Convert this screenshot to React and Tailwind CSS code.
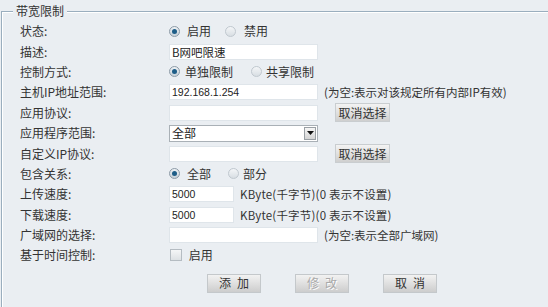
import React from "react";

const CJK = { fontFamily: '"Noto Sans CJK SC", "Liberation Sans", sans-serif' };

function Radio({ checked }) {
  return checked ? (
    <span className="flex h-[11px] w-[11px] shrink-0 items-center justify-center rounded-full border border-[#8d9ba7] bg-gradient-to-b from-[#eef2f5] to-[#c6d0d8]">
      <span className="h-[5px] w-[5px] rounded-full bg-[#1d5d87]" />
    </span>
  ) : (
    <span className="block h-[11px] w-[11px] shrink-0 rounded-full border border-[#c0c8cf] bg-gradient-to-b from-[#f4f6f8] to-[#d8dee3]" />
  );
}

function TextBox({ value = "", w = "w-[149px]" }) {
  return (
    <div
      className={`flex h-[16px] ${w} items-center border border-[#dfe5ea] bg-white pl-[2px] text-[10.5px] text-[#222]`}
      style={{ fontFamily: '"Liberation Sans", "Noto Sans CJK SC", sans-serif' }}
    >
      {value}
    </div>
  );
}

function CancelSel() {
  return (
    <div className="ml-[17px] flex h-[19px] w-[55px] items-center justify-center border border-[#c9cdd0] bg-gradient-to-b from-[#f3f3f3] to-[#cfcfcf] text-[12px] text-[#333]">
      取消选择
    </div>
  );
}

function Row({ label, children }) {
  return (
    <div className="grid h-[20.4px] grid-cols-[167px_1fr] items-center">
      <div className="pl-[18px] text-[12px] text-[#333]">{label}</div>
      <div className="flex items-center">{children}</div>
    </div>
  );
}

function Btn({ children, disabled }) {
  return (
    <div
      className={`flex h-[19px] w-[54px] items-center justify-center border border-[#c4c8cb] bg-gradient-to-b from-[#f2f2f2] to-[#cdcdcd] text-[12px] tracking-[6px] ${
        disabled ? "text-[#a9a9a9] [text-shadow:1px_1px_0_#fff]" : "text-[#333]"
      }`}
    >
      <span className="pl-[6px]">{children}</span>
    </div>
  );
}

export default function App() {
  return (
    <div className="h-[307px] w-[548px] overflow-hidden bg-[#eaeef2] leading-[14px]" style={CJK}>
      <fieldset className="ml-px mt-[3px] h-[340px] w-[600px] border border-[#9aaebe] p-0 shadow-[inset_1px_1px_0_#ffffff]">
        <legend className="ml-[11px] bg-[#eaeef2] px-[3px] text-[12px] leading-[16px] text-[#333]">带宽限制</legend>
        <div className="pt-[2px]">
          <Row label="状态:">
            <Radio checked />
            <span className="ml-[7px] text-[12px] text-[#333]">启用</span>
            <span className="ml-[14px]"><Radio /></span>
            <span className="ml-[8px] text-[12px] text-[#333]">禁用</span>
          </Row>
          <Row label="描述:">
            <TextBox value={<span style={CJK} className="text-[11.5px]">B网吧限速</span>} />
          </Row>
          <Row label="控制方式:">
            <Radio checked />
            <span className="ml-[5px] text-[12px] text-[#333]">单独限制</span>
            <span className="ml-[18px]"><Radio /></span>
            <span className="ml-[4px] text-[12px] text-[#333]">共享限制</span>
          </Row>
          <Row label="主机IP地址范围:">
            <TextBox value="192.168.1.254" />
            <span className="ml-[6px] text-[11.5px] text-[#333]">(为空:表示对该规定所有内部IP有效)</span>
          </Row>
          <Row label="应用协议:">
            <TextBox />
            <CancelSel />
          </Row>
          <Row label="应用程序范围:">
            <div className="flex h-[17px] w-[149px] items-center justify-between border border-[#a9b0b6] bg-white pl-[2px] pr-px">
              <span className="text-[12px] text-[#222]">全部</span>
              <span className="flex h-[13px] w-[12px] items-center justify-center border border-[#9aa0a5] bg-gradient-to-b from-[#f6f6f6] to-[#d4d4d4]">
                <svg width="7" height="4" viewBox="0 0 7 4"><path d="M0 0h7L3.5 4z" fill="#111" /></svg>
              </span>
            </div>
          </Row>
          <Row label="自定义IP协议:">
            <TextBox />
            <CancelSel />
          </Row>
          <Row label="包含关系:">
            <Radio checked />
            <span className="ml-[7px] text-[12px] text-[#333]">全部</span>
            <span className="ml-[17px]"><Radio /></span>
            <span className="ml-[4px] text-[12px] text-[#333]">部分</span>
          </Row>
          <Row label="上传速度:">
            <TextBox value="5000" w="w-[65px]" />
            <span className="ml-[6px] text-[11.5px] tracking-[0.2px] text-[#333]">KByte(千字节)(0 表示不设置)</span>
          </Row>
          <Row label="下载速度:">
            <TextBox value="5000" w="w-[65px]" />
            <span className="ml-[6px] text-[11.5px] tracking-[0.2px] text-[#333]">KByte(千字节)(0 表示不设置)</span>
          </Row>
          <Row label="广域网的选择:">
            <TextBox />
            <span className="ml-[6px] text-[11.5px] text-[#333]">(为空:表示全部广域网)</span>
          </Row>
          <Row label="基于时间控制:">
            <span className="ml-px block h-[12px] w-[12px] border border-[#b5bcc2] bg-gradient-to-b from-[#f5f6f7] to-[#dde1e4]" />
            <span className="ml-[4px] text-[12px] text-[#333]">&nbsp;启用</span>
          </Row>
          <div className="mt-[8px] flex gap-[34px] pl-[205px]">
            <Btn>添加</Btn>
            <Btn disabled>修改</Btn>
            <Btn>取消</Btn>
          </div>
        </div>
      </fieldset>
    </div>
  );
}
